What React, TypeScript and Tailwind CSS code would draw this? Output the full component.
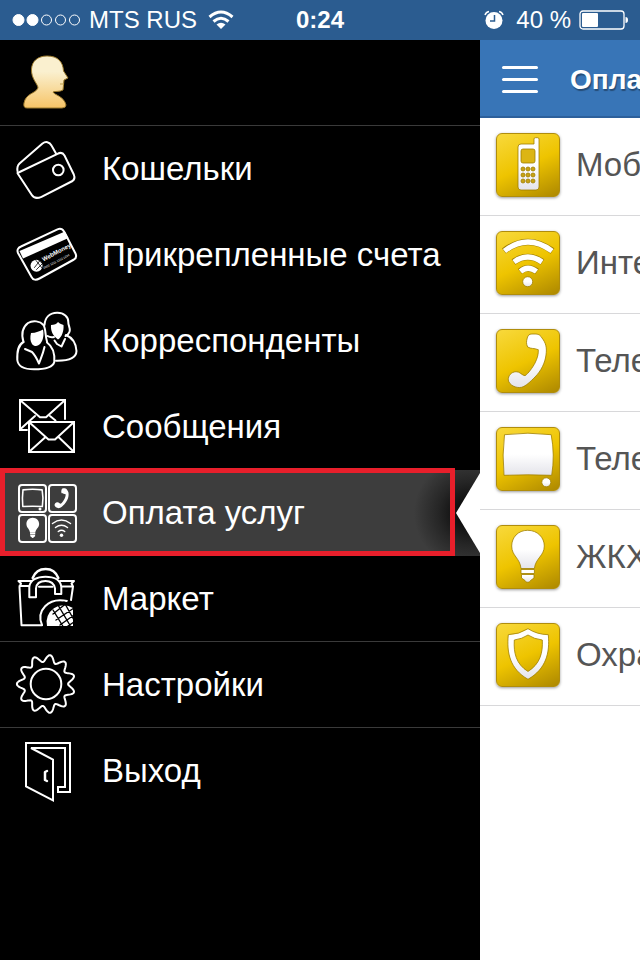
import type { ReactNode } from 'react';

interface MenuItem {
  label: string;
  icon: ReactNode;
  active?: boolean;
  divided?: boolean;
}

interface Service {
  label: string;
  glyph: ReactNode;
}

const HANDSET =
  'M40 5C43 5 45 7 46 9C50 14 51 19 50 26C49 34 45 42 39 48C34 53 30 57 25.5 58.3C20 59.5 13 56 12.3 51C12 47 15 43 20 42.7C24 42.5 26 46.5 29 46.7C32 45 37 38 39 34C41.5 29 42.5 25 42.3 20.7C38 19 35 20 31.7 18C30 15 30.5 12 31 10C31.5 7 33 4.7 36 5Z';
const BULB_GLASS =
  'M31.7 5.3C22 5.3 15.7 12.5 15.7 21C15.7 31 24 33 25 43.5H38.4C39.5 33 48.3 31 48.3 21C48.3 12.5 41.5 5.3 31.7 5.3Z';
const BULB_BASE = 'M25 44.5H38.4V48.5H25ZM25.5 49.5H38V53L34.5 55.5C34 57.8 29.5 57.8 29 55.5L25.5 53Z';
const SCREEN = 'M8.5 7.7Q32 4.7 55.2 7.7Q59 28 55.7 48.3Q32 47.3 8 48.3Q6 28 8.5 7.7Z';

function gearPath() {
  const steps = 220;
  const points: string[] = [];
  for (let i = 0; i < steps; i++) {
    const angle = (i / steps) * Math.PI * 2;
    const wave = Math.cos(11 * (angle - Math.PI));
    const radius = 25.6 + 3.5 * wave;
    points.push(`${(32 + radius * Math.cos(angle)).toFixed(2)} ${(31 + radius * Math.sin(angle)).toFixed(2)}`);
  }
  return `M${points.join('L')}Z`;
}

function LineIcon({ children }: { children: ReactNode }) {
  return (
    <svg
      viewBox="0 0 64 64"
      className="size-16 shrink-0"
      fill="none"
      stroke="#fff"
      strokeWidth="2"
      strokeLinejoin="round"
      strokeLinecap="round"
      aria-hidden="true"
    >
      {children}
    </svg>
  );
}

function WalletIcon() {
  return (
    <LineIcon>
      <path d="M42 16.5L37.5 8.5C35.5 4.7 31.5 4.2 28.5 6.5L5.5 26.5C3.5 28.5 3 31 3.5 34" />
      <path d="M3.5 36L43.5 16.8C46.5 15.2 48.8 15.5 50.5 18.5L59.8 37.5C61 40.5 60.5 42.5 58.5 44L27.5 59.8C23.5 61.5 20 61.5 17.8 58L4 37Z" />
      <circle cx="44.3" cy="33" r="5.3" />
    </LineIcon>
  );
}

function CardIcon() {
  return (
    <LineIcon>
      <path d="M7 23.5L43.5 6.3C46.5 5 48.5 6 50 8.5L61.5 30.5C62.8 33.5 62 35.3 60 36.5L25.5 55.5C22 57.5 19 57 17.5 54L4 30C2.7 27 4 24.8 7 23.5Z" />
      <path d="M5.5 28L51 8.5L54.5 15L9 35.5Z" fill="#fff" stroke="none" />
      <circle cx="22.5" cy="42.7" r="6" fill="#fff" stroke="none" />
      <path
        d="M22 37.5L28 45M24 36.5L29 41M22.5 46.5L28.5 40.5M20.5 44.5L26 37.5"
        stroke="#000"
        strokeWidth="0.8"
      />
      <g fill="#fff" stroke="none" fontFamily="Liberation Sans, sans-serif">
        <text x="0" y="0" fontSize="6" fontWeight="bold" transform="translate(29.5 38.5) rotate(-28)">
          WebMoney
        </text>
        <text x="0" y="0" fontSize="3" transform="translate(30 46) rotate(-27)">
          0000 1211 1212 1234
        </text>
      </g>
    </LineIcon>
  );
}

function PeopleIcon() {
  return (
    <LineIcon>
      <path d="M9.5 33C7 25 9 18 14 14C19 11 26 12 29.5 16C32 20 31 26 33 32.5" />
      <path d="M9.5 33C4 36 3 42 3.3 51C4 57 10 60.3 20 60.3C32 60.3 39 58 40.3 53C41 43 38 37 33 33.5" />
      <path d="M11 40L18 43C21 46 23 50 25 54.5C27 49 29 45 30.5 38" />
      <path d="M17 24C22 24 26 22 29 20.5C30 25 29.5 31 26.5 34.5C24 37.5 20.5 38 18 35C16 32 16 28 17 24Z" fill="#fff" stroke="none" />
      <path d="M30.5 16C31 8 36 3.8 43 3.7C50 3.5 54.5 8 54.3 13C54 17 58 21 54.5 24.5C53.5 26.5 52 26.5 51.5 27" />
      <path d="M33.5 27C36 28.5 38 28.5 40 28M52 26C58 28.5 62 33 62.5 42C62.3 48 56 52 42 51.7" />
      <path d="M40.500 31.5L43 35L47.5 37.5L51 30" />
      <path d="M37 16C40 16 43 15 44 13C46 15 48 15.5 49.5 16C50 22 48 28 44 30.5C39 27 36.5 22 37 16Z" fill="#fff" stroke="none" />
    </LineIcon>
  );
}

function MailIcon() {
  return (
    <LineIcon>
      <path d="M13 35H6V5H51V24" strokeLinejoin="miter" />
      <path d="M6.5 5.5L26 22.3H32L50.5 5.5M6.5 34L21 21M36 21L41.5 25.5" />
      <path d="M15 27H60V57H15Z" strokeLinejoin="miter" />
      <path d="M15.5 27.5L34.5 44.5H41L59.5 27.5M15.5 56.5L31 42.5M59.5 56.5L45 42.5" />
    </LineIcon>
  );
}

function PaymentIcon() {
  return (
    <LineIcon>
      <rect x="5" y="4" width="27" height="27" rx="3" />
      <rect x="35" y="4" width="27" height="27" rx="3" />
      <rect x="5" y="34" width="27" height="27" rx="3" />
      <rect x="35" y="34" width="27" height="27" rx="3" />
      <path d={SCREEN} transform="translate(5.5 5.7) scale(.41)" strokeWidth="3.8" />
      <circle cx="26" cy="28" r="1.5" fill="#fff" stroke="none" />
      <g fill="#fff" stroke="none">
        <path d={HANDSET} transform="translate(36 5.5) scale(.37)" />
        <path d={BULB_GLASS} transform="translate(6.3 34.7) scale(.39)" />
        <path d={BULB_BASE} transform="translate(6.3 34.7) scale(.39)" />
        <circle cx="47.5" cy="54.3" r="1.7" />
      </g>
      <path d="M38.5 42.5Q47.5 35.5 56.5 42.5M41.5 46.5Q47.5 42 53.5 46.5M44.3 50.5Q47.5 48 50.7 50.5" strokeWidth="1.500" />
    </LineIcon>
  );
}

function MarketIcon() {
  return (
    <LineIcon>
      <path d="M18.7 11C21 5 26 2 31.7 2C37.5 2 42 5 44.3 11" strokeWidth="2.5" />
      <path d="M17.5 14H4.5L7 16.5L5.5 20L7.5 58.3H28M46 14H60L57.500 16.5L59 19.5L57 33M5.500 19H15M25 19.7H38.5M48 19.5H58" />
      <path d="M15.3 30.3V20C16 13 23 9.7 31.5 9.7C40 9.7 46.7 13 47.3 20V27H41V21.5C40 16 36.5 14 31.5 14C26.5 14 22.5 16 22 21.5V30.3Z" />
      <path d="M28 58C22 44 34 30 53 34" />
      <path d="M33 59A17 17 0 0 1 59 41V59Z" fill="#fff" stroke="none" />
      <path
        d="M39 43L50 61M44 38L57 60M50 35L60 53M39 47L54 35M42 53L60 41M46 58L60 48M51 61L60 55"
        stroke="#000"
        strokeWidth="1.4"
      />
    </LineIcon>
  );
}

function SettingsIcon() {
  return (
    <LineIcon>
      <path d={gearPath()} />
      <circle cx="32" cy="31" r="15.3" />
    </LineIcon>
  );
}

function ExitIcon() {
  return (
    <LineIcon>
      <path d="M12 4H56V53H44V48H51V9H17L39 20.5V61.3L12 47.3Z" strokeLinejoin="miter" />
      <path d="M33 32L31 33V41L33 42" strokeWidth="2.5" />
    </LineIcon>
  );
}

const menu: MenuItem[] = [
  { label: 'Кошельки', icon: <WalletIcon /> },
  { label: 'Прикрепленные счета', icon: <CardIcon /> },
  { label: 'Корреспонденты', icon: <PeopleIcon /> },
  { label: 'Сообщения', icon: <MailIcon /> },
  { label: 'Оплата услуг', icon: <PaymentIcon />, active: true },
  { label: 'Маркет', icon: <MarketIcon />, divided: true },
  { label: 'Настройки', icon: <SettingsIcon />, divided: true },
  { label: 'Выход', icon: <ExitIcon /> },
];

const keypad = [36, 42, 48].flatMap((y) => [27, 32, 37].map((x) => ({ x, y })));

const services: Service[] = [
  {
    label: 'Мобильная связь',
    glyph: (
      <>
        <path d="M38 11V6Q38 4.7 39.5 4.7H41.5Q43 4.7 43 6V54Q43 57 40 57H25Q22 57 22 54V14Q22 11 25 11Z" />
        <rect x="25" y="16" width="14" height="14" rx="2" fill="#dcb513" />
        {keypad.map(({ x, y }) => (
          <circle key={`${x}-${y}`} cx={x} cy={y} r="2" fill="#c9a212" />
        ))}
      </>
    ),
  },
  {
    label: 'Интернет',
    glyph: (
      <>
        <g fill="none" stroke="#a07f00" strokeWidth="6.5">
          <path d="M8 20Q31.7 2 56.5 20M17.5 31Q31.7 21 46.5 31M24 40.5Q31.7 34 41 40.5" />
        </g>
        <g fill="none" stroke="#fff" strokeWidth="5.2">
          <path d="M8.5 20Q31.7 2 56 20M18 31Q31.7 21 46 31M24.5 40.5Q31.7 34 40.5 40.5" />
        </g>
        <circle cx="31.7" cy="50.7" r="5" />
      </>
    ),
  },
  { label: 'Телефония', glyph: <path d={HANDSET} /> },
  {
    label: 'Телевидение',
    glyph: (
      <>
        <path d={SCREEN} />
        <circle cx="50.3" cy="55.3" r="4.5" />
      </>
    ),
  },
  {
    label: 'ЖКХ',
    glyph: (
      <>
        <path d={BULB_GLASS} />
        <path d={BULB_BASE} />
      </>
    ),
  },
  {
    label: 'Охрана',
    glyph: (
      <path
        fillRule="evenodd"
        d="M32 5.7Q41 11.5 52.3 11.7C54 30 50 46 32 56.3C14 46 10.5 30 12.3 11.7Q23 11.5 32 5.7ZM32 12Q38 16 46.3 17C47 30 44 41 32 48.5C20 41 17.5 30 18.3 17Q26 16 32 12Z"
      />
    ),
  },
];

function StatusBar() {
  return (
    <div className="relative flex h-10 items-center justify-between bg-[#2b5c90] pr-[11px] pl-3 text-2xl text-white">
      <div className="flex items-center gap-[7px]">
        <svg viewBox="0 0 70 14" className="h-[14px] w-[70px]" fill="none" stroke="#fff" aria-hidden="true">
          <circle cx="6.5" cy="7" r="5.5" fill="#fff" />
          <circle cx="20.5" cy="7" r="5.5" fill="#fff" />
          <circle cx="34.5" cy="7" r="5" />
          <circle cx="48.5" cy="7" r="5" />
          <circle cx="62.5" cy="7" r="5" />
        </svg>
        <span>MTS RUS</span>
        <svg viewBox="0 0 26 20" className="ml-1 h-5 w-[26px]" fill="none" stroke="#fff" strokeWidth="3" aria-hidden="true">
          <path d="M1.5 7Q13 -3 24.5 7M5.5 11.5Q13 5 20.5 11.5" />
          <path d="M8.5 14.5Q13 11 17.5 14.5L13 19Z" fill="#fff" stroke="none" />
        </svg>
      </div>
      <span className="absolute left-1/2 -translate-x-1/2 font-bold">0:24</span>
      <div className="flex items-center gap-2">
        <svg viewBox="0 0 20 20" className="mr-1 size-5" aria-hidden="true">
          <circle cx="10" cy="10.5" r="8.5" fill="#fff" />
          <path d="M1 5Q2 2 5 1.5M19 5Q18 2 15 1.5" fill="none" stroke="#fff" strokeWidth="1.5" />
          <path d="M10.5 5V11H6" fill="none" stroke="#2b5c90" strokeWidth="1.5" />
        </svg>
        <span>40 %</span>
        <svg viewBox="0 0 50 20" className="h-5 w-[50px]" aria-hidden="true">
          <rect x="1" y="1" width="44" height="18" rx="3" fill="none" stroke="#fff" strokeWidth="1.3" />
          <rect x="3" y="3" width="16" height="14" rx="1" fill="#fff" />
          <path d="M46.5 7Q49 7 49 10Q49 13 46.5 13Z" fill="#fff" />
        </svg>
      </div>
    </div>
  );
}

function MenuRow({ label, icon, active, divided }: MenuItem) {
  return (
    <li className="relative">
      <button
        type="button"
        aria-current={active ? 'page' : undefined}
        className={`flex h-[86px] w-full items-center gap-6 border-b pl-[14px] text-left text-[33px] whitespace-nowrap text-white ${
          divided ? 'border-[#3a3a3a]' : 'border-transparent'
        } ${active ? 'bg-[radial-gradient(circle_at_470px_50%,#0c0c0c_10px,#262626_32px,#3d3d3d_56px)] bg-origin-border' : ''}`}
      >
        {icon}
        <span>{label}</span>
      </button>
      {active && (
        <>
          <svg viewBox="0 0 24 80" className="absolute top-[3px] right-0 h-20 w-6" aria-hidden="true">
            <path d="M24 0L0 40L24 80Z" fill="#fff" />
          </svg>
          <div className="pointer-events-none absolute -top-[2px] right-[25px] bottom-0 left-0 border-[5px] border-[#e81f2b]" />
        </>
      )}
    </li>
  );
}

function ServiceRow({ label, glyph }: Service) {
  return (
    <li>
      <button
        type="button"
        className="flex h-[98px] w-full items-center gap-4 border-b border-[#d8d8da] pb-[3px] pl-4 text-left text-[33px] whitespace-nowrap text-[#555]"
      >
        <span className="size-16 shrink-0 rounded-md border border-[#b08d0c] bg-[linear-gradient(155deg,#f8d93c_0%,#eec400_50%,#ad8800_100%)] shadow-[0_1px_3px_rgba(0,0,0,0.4)]">
          <svg viewBox="1 1 62 62" className="size-full" fill="url(#glyph-fill)" stroke="#a07f00" strokeWidth="0.8" aria-hidden="true">
            {glyph}
          </svg>
        </span>
        <span>{label}</span>
      </button>
    </li>
  );
}

export default function App() {
  return (
    <div className="flex min-h-screen flex-col overflow-hidden bg-white font-['Liberation_Sans',Arial,sans-serif]">
      <svg className="absolute size-0" aria-hidden="true">
        <linearGradient id="glyph-fill" x1="0" y1="0" x2="0" y2="1">
          <stop offset="0.5" stopColor="#fff" />
          <stop offset="1" stopColor="#e4e4ea" />
        </linearGradient>
      </svg>
      <StatusBar />
      <div className="flex flex-1">
        <nav className="w-3/4 shrink-0 bg-black">
          <div className="flex h-[86px] items-center border-b border-[#3a3a3a] pl-[14px]">
            <svg viewBox="0 0 64 64" className="size-16" aria-label="Профиль" role="img">
              <defs>
                <linearGradient id="profile-fill" x1="0" y1="0" x2="0" y2="1">
                  <stop offset="0.3" stopColor="#faf0cf" />
                  <stop offset="1" stopColor="#f6c467" />
                </linearGradient>
              </defs>
              <path
                d="M33 5C44 5 49 11 49.5 20L54 27L50 29L49 39C46 41 41 40 39 41C40 44 50 45 52 54Q52 57 48 57H13Q9 57 10 52C12 42 21 43 24 37C24 33 17 28 17.5 18C18 10 24 5 33 5Z"
                fill="url(#profile-fill)"
                stroke="#9c7a2c"
              />
              <path d="M46 33H50" stroke="#b99b4a" />
            </svg>
          </div>
          <ul>
            {menu.map((item) => (
              <MenuRow key={item.label} {...item} />
            ))}
          </ul>
        </nav>
        <main className="min-w-0 flex-1 overflow-hidden">
          <header className="flex h-[78px] items-center gap-8 border-b-2 border-[#2d609b] bg-[#3875b7] pt-[3px] pl-[22px]">
            <button type="button" aria-label="Меню" className="flex w-9 shrink-0 flex-col gap-[9px]">
              <span className="h-[3px] rounded-full bg-white" />
              <span className="h-[3px] rounded-full bg-white" />
              <span className="h-[3px] rounded-full bg-white" />
            </button>
            <h1 className="text-[28px] font-bold whitespace-nowrap text-white [text-shadow:1px_2px_1px_rgba(0,0,0,0.35)]">
              Оплата услуг
            </h1>
          </header>
          <ul>
            {services.map((service) => (
              <ServiceRow key={service.label} {...service} />
            ))}
          </ul>
        </main>
      </div>
    </div>
  );
}
